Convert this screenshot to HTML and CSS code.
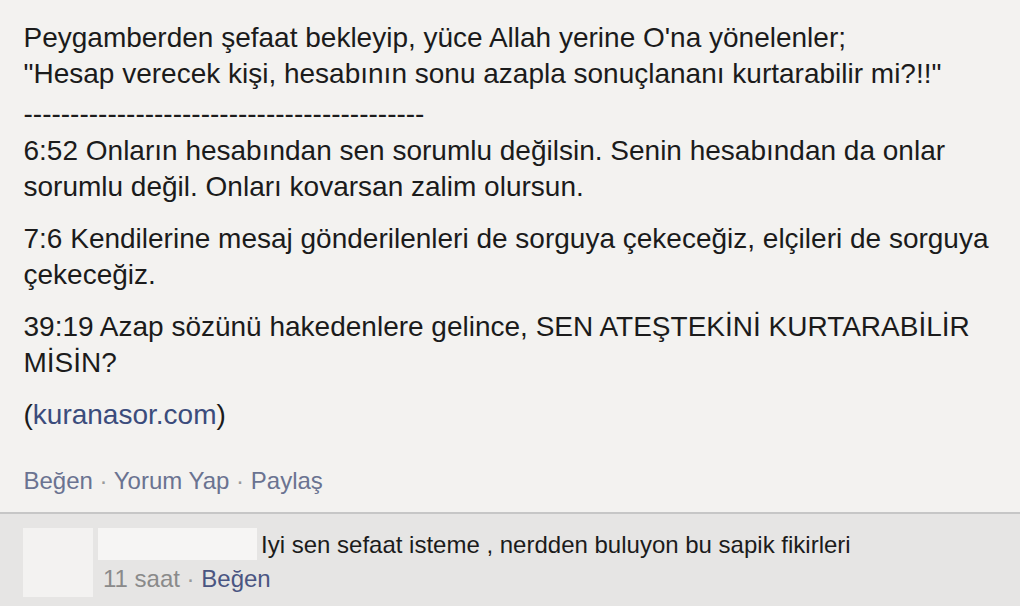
FILE: index.html
```html
<!DOCTYPE html>
<html lang="tr">
<head>
<meta charset="utf-8">
<title>Gönderi</title>
<link rel="stylesheet" href="styles.css">
</head>
<body>
<div class="post">
  <div class="post-text">
    <p class="para para-top">Peygamberden şefaat bekleyip, yüce Allah yerine O'na yönelenler;<br>"Hesap verecek kişi, hesabının sonu azapla sonuçlananı kurtarabilir mi?!!"</p>
    <div class="sep">-------------------------------------------</div>
    <p class="para">6:52 Onların hesabından sen sorumlu değilsin. Senin hesabından da onlar sorumlu değil. Onları kovarsan zalim olursun.</p>
    <p class="para">7:6 Kendilerine mesaj gönderilenleri de sorguya çekeceğiz, elçileri de sorguya çekeceğiz.</p>
    <p class="para">39:19 Azap sözünü hakedenlere gelince, SEN ATEŞTEKİNİ KURTARABİLİR MİSİN?</p>
    <p class="para">(<a class="link" href="#">kuranasor.com</a>)</p>
  </div>
  <div class="actions"><a class="action" href="#">Beğen</a><span class="dot"> · </span><a class="action" href="#">Yorum Yap</a><span class="dot"> · </span><a class="action" href="#">Paylaş</a></div>
</div>
<div class="comments">
  <div class="comment">
    <div class="avatar"></div>
    <div class="comment-body">
      <div class="comment-line"><span class="name-box"></span><span class="comment-text">Iyi sen sefaat isteme , nerdden buluyon bu sapik fikirleri</span></div>
      <div class="meta"><span class="time">11 saat</span><span class="meta-dot"> · </span><a class="meta-like" href="#">Beğen</a></div>
    </div>
  </div>
</div>
</body>
</html>
```
FILE: styles.css
```css
html, body {
  margin: 0;
  padding: 0;
}
body {
  background: #e6e5e4;
  font-family: "Liberation Sans", Arial, sans-serif;
  color: #1b1b1b;
  width: 1020px;
  height: 606px;
  overflow: hidden;
}
.post {
  background: #f3f2f0;
  padding: 20px 20px 16px 23.5px;
}
.post-text {
  font-size: 28px;
  line-height: 36px;
}
.para {
  margin: 0 0 16px 0;
}
.para:last-child {
  margin-bottom: 0;
}
.para-top {
  margin-bottom: 0;
}
.sep {
  margin: 4px 0 1px 0;
  white-space: nowrap;
}
.link {
  color: #3b4c7c;
  text-decoration: none;
}
.actions {
  margin-top: 33px;
  font-size: 24px;
  line-height: 30px;
  white-space: nowrap;
}
.action {
  color: #6a7391;
  text-decoration: none;
}
.dot {
  color: #9a9a9a;
}
.comments {
  border-top: 2px solid #c6c6c6;
  background: #e6e5e4;
  padding: 14px 20px 0 23px;
}
.comment {
  display: flex;
  align-items: flex-start;
}
.avatar {
  width: 70px;
  height: 69px;
  background: #f3f2f1;
  flex: none;
}
.comment-body {
  margin-left: 5px;
  font-size: 24px;
}
.comment-line {
  line-height: 33px;
  white-space: nowrap;
}
.name-box {
  display: inline-block;
  vertical-align: top;
  width: 159px;
  height: 32px;
  background: #f6f5f4;
}
.comment-text {
  margin-left: 4px;
  color: #1b1b1b;
}
.meta {
  margin-top: 3px;
  padding-left: 5px;
  line-height: 30px;
  white-space: nowrap;
}
.time {
  color: #8a8a8a;
}
.meta-dot {
  color: #9a9a9a;
}
.meta-like {
  color: #4a5582;
  text-decoration: none;
}
```
